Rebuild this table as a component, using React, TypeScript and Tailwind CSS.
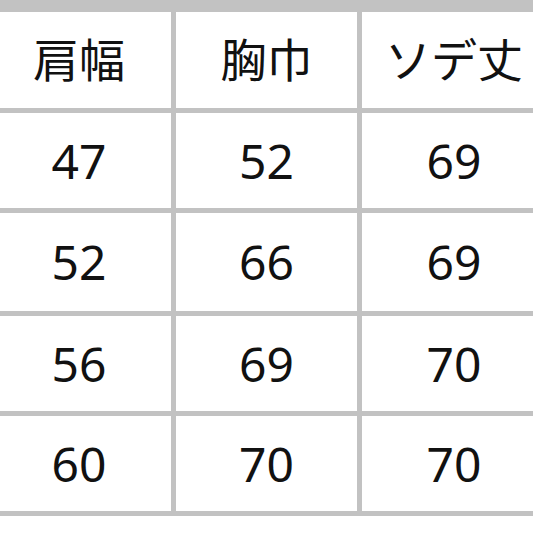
import React from "react";

const rows: string[][] = [
  ["肩幅", "胸巾", "ソデ丈"],
  ["47", "52", "69"],
  ["52", "66", "69"],
  ["56", "69", "70"],
  ["60", "70", "70"],
];

export default function App() {
  return (
    <div className="w-[533px] h-[533px] overflow-hidden bg-white">
      <div
        className="ml-[-13px] w-[559px] bg-[#c2c2c2] pt-[12px] pb-[5px] grid grid-cols-[184px_181px_184px] grid-rows-[96px_95px_98px_95px_95px] gap-[5px]"
        style={{ fontFamily: '"Noto Sans", "Noto Sans CJK JP", sans-serif' }}
      >
        {rows.flat().map((t, i) => (
          <div
            key={i}
            className={
              i < 3
                ? "bg-white flex items-center justify-center text-[46px] leading-none text-[#111111] pb-[3px]"
                : "bg-white flex items-center justify-center text-[48px] leading-none text-[#111111]"
            }
          >
            {t}
          </div>
        ))}
      </div>
    </div>
  );
}
